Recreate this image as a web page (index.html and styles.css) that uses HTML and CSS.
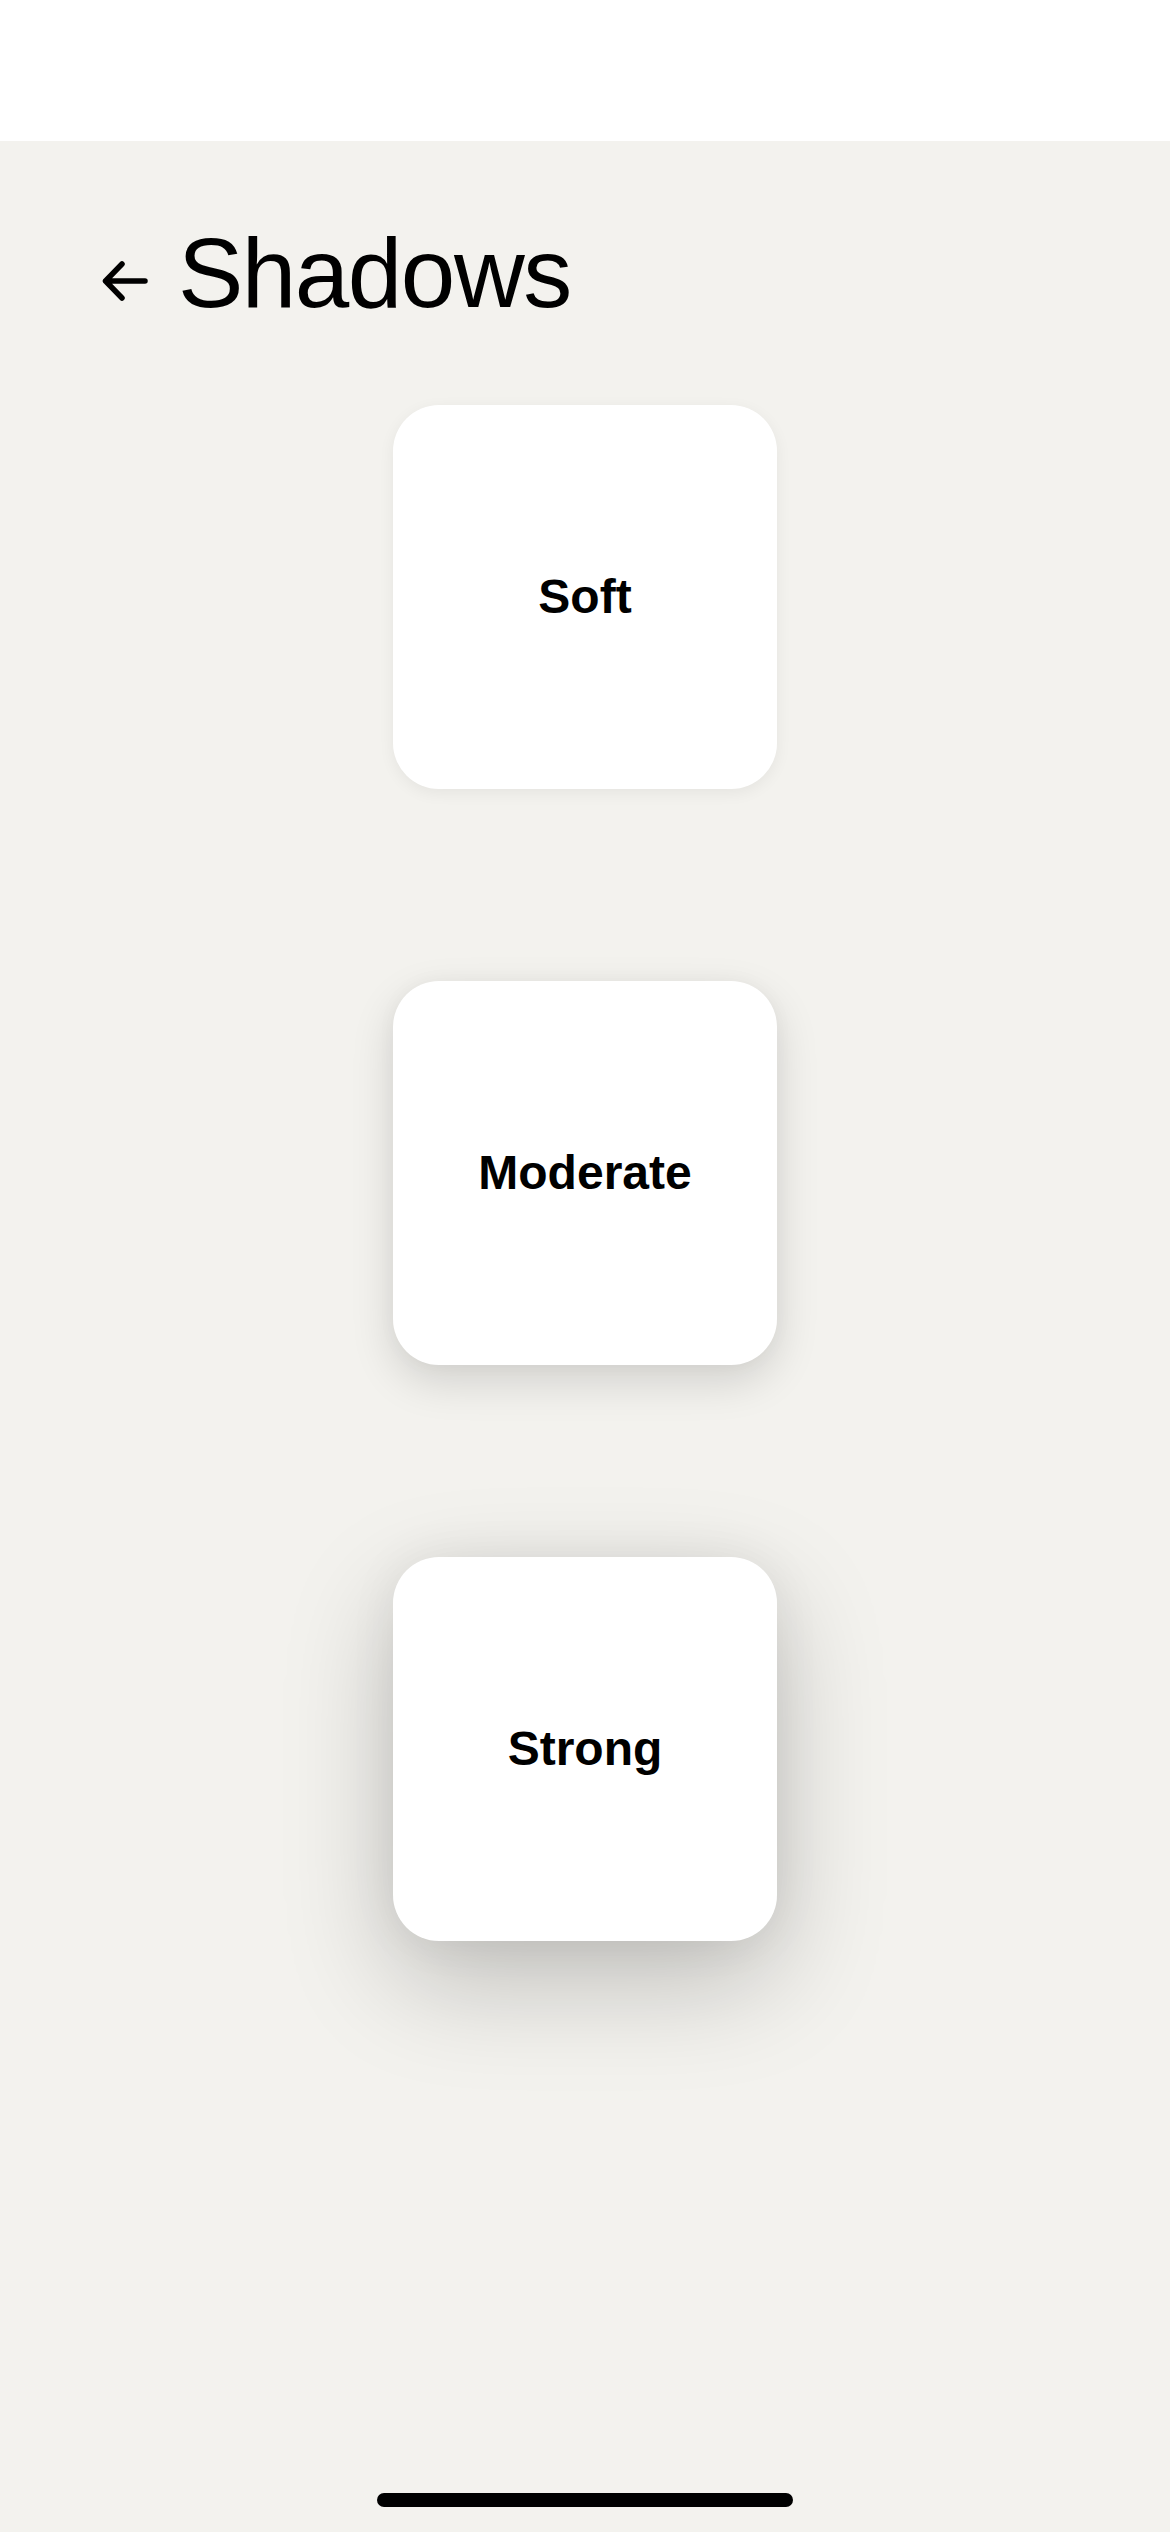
FILE: index.html
```
<!DOCTYPE html>
<html lang="en">
<head>
<meta charset="utf-8">
<title>Shadows</title>
<link rel="stylesheet" href="styles.css">
</head>
<body>
  <div class="status-bar"></div>
  <main class="screen">
    <header class="header">
      <svg class="back" viewBox="0 0 46 40" width="46" height="40" aria-hidden="true">
        <path d="M3.5 20 H43 M20 3 L3.5 20 L20 37" fill="none" stroke="#000" stroke-width="5.5" stroke-linecap="round" stroke-linejoin="round"/>
      </svg>
      <h1 class="title">Shadows</h1>
    </header>
    <section class="cards">
      <div class="card card-soft">Soft</div>
      <div class="card card-moderate">Moderate</div>
      <div class="card card-strong">Strong</div>
    </section>
    <div class="home-indicator"></div>
  </main>
</body>
</html>
```
FILE: styles.css
```
* { box-sizing: border-box; }
html, body {
  margin: 0;
  padding: 0;
  background: #f3f2ee;
}
body {
  width: 1170px;
  height: 2532px;
  display: flex;
  flex-direction: column;
  font-family: "Liberation Sans", Arial, sans-serif;
  color: #000;
  overflow: hidden;
}
.status-bar {
  height: 141px;
  background: #ffffff;
  flex: none;
}
.screen {
  flex: 1;
  display: flex;
  flex-direction: column;
}
.header {
  display: flex;
  align-items: flex-start;
  padding: 83px 0 0 102px;
  gap: 30px;
}
.back {
  margin-top: 37px;
  flex: none;
}
.title {
  margin: 0;
  font-size: 98px;
  line-height: 98px;
  font-weight: 400;
  letter-spacing: -1.5px;
}
.cards {
  display: flex;
  flex-direction: column;
  align-items: center;
  gap: 192px;
  margin-top: 83px;
}
.card {
  width: 384px;
  height: 384px;
  border-radius: 46px;
  background: #ffffff;
  display: flex;
  align-items: center;
  justify-content: center;
  font-size: 48px;
  font-weight: 700;
  line-height: 1;
}
.card-soft {
  box-shadow: 0 4px 16px rgba(0, 0, 0, 0.06);
}
.card-moderate {
  box-shadow: 0 16px 44px rgba(0, 0, 0, 0.14), 0 0 20px rgba(0, 0, 0, 0.03);
}
.card-strong {
  box-shadow: 0 40px 110px rgba(0, 0, 0, 0.22), 0 0 50px rgba(0, 0, 0, 0.06);
}
.home-indicator {
  margin: auto auto 25px;
  width: 416px;
  height: 14px;
  border-radius: 7px;
  background: #000;
}
```
